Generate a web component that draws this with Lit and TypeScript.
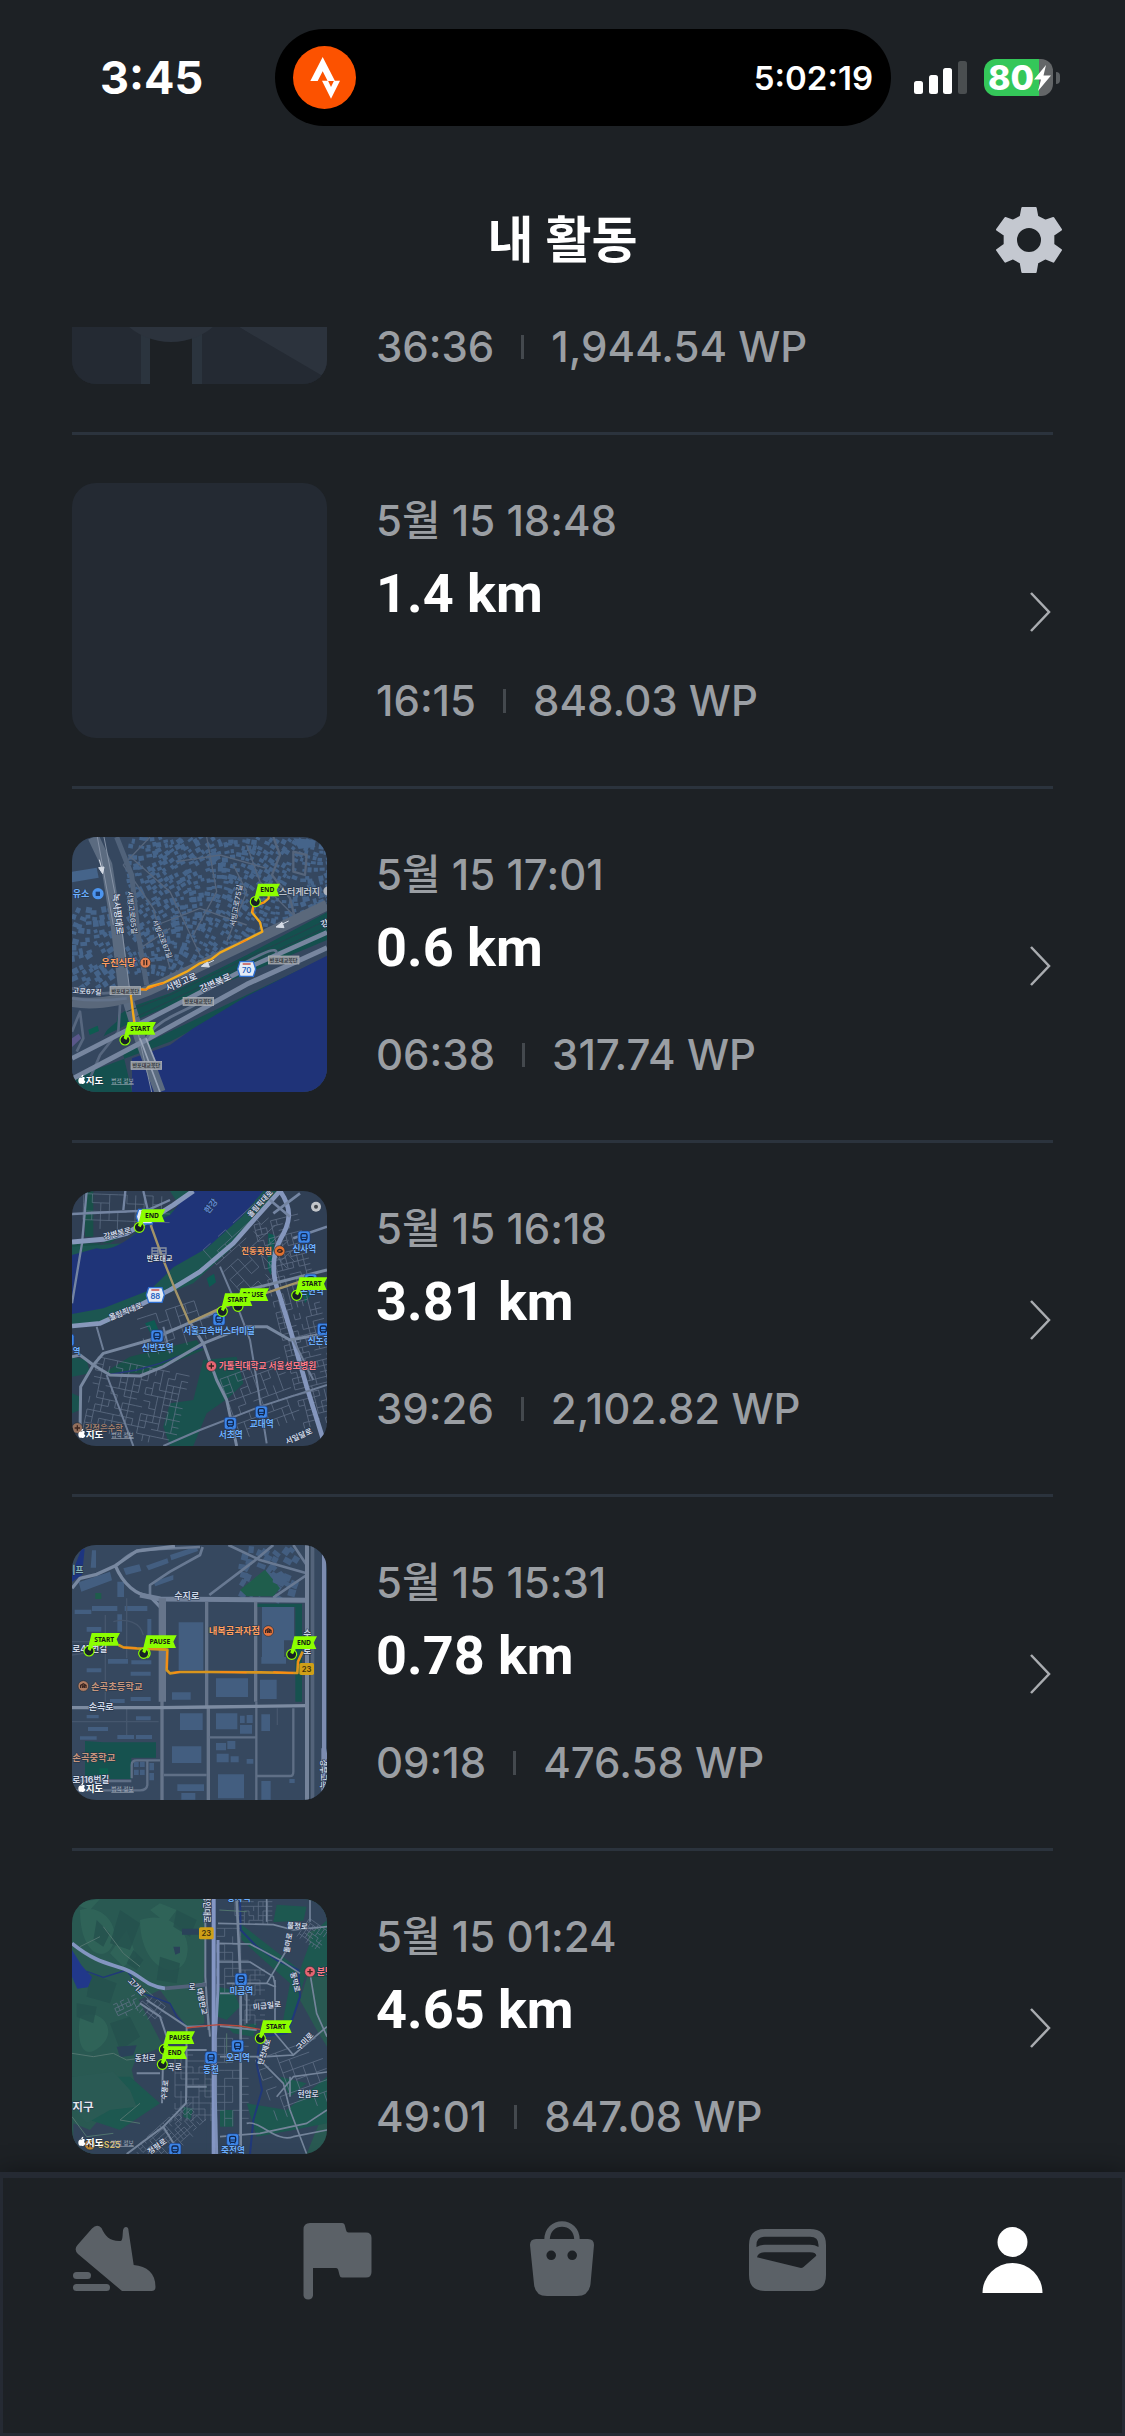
import { LitElement, html, svg, css, nothing } from "lit";
import { customElement, property, query } from "lit/decorators.js";

type MapKind = "placeholder" | "empty" | "seobinggo" | "banpo" | "suji" | "migeum";

interface Activity {
  date?: string;
  distance?: string;
  duration: string;
  points: string;
  map: MapKind;
}

const ACTIVITIES: Activity[] = [
  { duration: "36:36", points: "1,944.54 WP", map: "placeholder" },
  { date: "5월 15 18:48", distance: "1.4 km", duration: "16:15", points: "848.03 WP", map: "empty" },
  { date: "5월 15 17:01", distance: "0.6 km", duration: "06:38", points: "317.74 WP", map: "seobinggo" },
  { date: "5월 15 16:18", distance: "3.81 km", duration: "39:26", points: "2,102.82 WP", map: "banpo" },
  { date: "5월 15 15:31", distance: "0.78 km", duration: "09:18", points: "476.58 WP", map: "suji" },
  { date: "5월 15 01:24", distance: "4.65 km", duration: "49:01", points: "847.08 WP", map: "migeum" },
];

/* ---------- map drawing helpers (three map units per pixel) ---------- */

const LIME = "#8cff00";

/** Small deterministic generator, so that building footprints stay put. */
const random = (seed: number) => () => {
  seed = (seed * 16807) % 2147483647;
  return seed / 2147483647;
};

/** Scattered building footprints as one path. */
const buildings = (seed: number, x0: number, y0: number, x1: number, y1: number, step: number) => {
  const next = random(seed);
  let d = "";
  for (let y = y0; y < y1; y += step) {
    for (let x = x0; x < x1; x += step) {
      if (next() < 0.1) continue;
      const a = Math.sin(x / 90 + y / 130) * 0.6 + (next() - 0.5) * 0.3;
      const w = step * (0.5 + next() * 0.5);
      const h = step * (0.45 + next() * 0.45);
      const cx = x + (next() - 0.5) * step * 0.7;
      const cy = y + (next() - 0.5) * step * 0.7;
      const ux = Math.cos(a) * w;
      const uy = Math.sin(a) * w;
      const vx = -Math.sin(a) * h;
      const vy = Math.cos(a) * h;
      d += `M${cx.toFixed(1)} ${cy.toFixed(1)}l${ux.toFixed(1)} ${uy.toFixed(1)}l${vx.toFixed(1)} ${vy.toFixed(1)}l${(-ux).toFixed(1)} ${(-uy).toFixed(1)}z`;
    }
  }
  return d;
};

/** Irregular grid of side streets, turned by the given angle. */
const streets = (seed: number, cx: number, cy: number, w: number, h: number, angle: number, step: number) => {
  const next = random(seed);
  let d = "";
  for (let y = -h / 2; y <= h / 2; y += step) {
    for (let x = -w / 2; x <= w / 2; x += step) {
      if (next() < 0.68) d += `M${x} ${y}h${step}`;
      if (next() < 0.62) d += `M${x} ${y}v${step}`;
    }
  }
  return svg`<path d=${d} transform="translate(${cx} ${cy}) rotate(${angle})" fill="none" stroke="#64738a" stroke-width="2" />`;
};

const road = (d: string, width: number, color: string) =>
  svg`<path d=${d} fill="none" stroke=${color} stroke-width=${width} stroke-linejoin="round" />`;

const label = (x: number, y: number, text: string, size: number, color: string, angle = 0, anchor = "middle") =>
  svg`<text x=${x} y=${y} font-size=${size} fill=${color} text-anchor=${anchor} transform="rotate(${angle} ${x} ${y})">${text}</text>`;

const flag = (x: number, y: number, width: number, text: string) => svg`
  <circle cx=${x} cy=${y} r="15" fill="#182126" stroke=${LIME} stroke-width="3.5" />
  <path fill=${LIME} d="M${x + 8} ${y - 54}H${x + width + 8}L${x + width - 2} ${y - 35}L${x + width + 6} ${y - 16}H${x + 12}L${x + 4} ${y}L${x - 4} ${y - 5}Z" />
  <text class="flag-text" x=${x + width / 2 + 3} y=${y - 28} text-anchor="middle">${text}</text>`;

const station = (x: number, y: number) => svg`
  <rect x=${x - 18} y=${y - 18} width="36" height="36" rx="7" fill="#3d86e8" stroke="#1b3a78" stroke-width="2" />
  <rect x=${x - 9} y=${y - 10} width="18" height="18" rx="5" fill="none" stroke="#10264e" stroke-width="4" />
  <path d="M${x - 8} ${y + 1}H${x + 8}M${x - 7} ${y + 12}l3 -4M${x + 7} ${y + 12}l-3 -4" stroke="#10264e" stroke-width="3" />`;

const poi = (x: number, y: number, color: string, mark: string) => svg`
  <circle cx=${x} cy=${y} r="16" fill=${color} stroke="#27313c" stroke-width="2" />
  <path d=${mark} transform="translate(${x} ${y})" fill="none" stroke="#3a2520" stroke-width="4" />`;

const FORK = "M-4 -8V8M4 -8V8";
const CROSS = "M-8 0H8M0 -8V8";
const ROOF = "M-8 6V-2L0 -7L8 -2V6M-2 6V0H3V6";

const shield = (x: number, y: number, text: string) => svg`
  <path d="M${x - 20} ${y - 22}H${x + 20}L${x + 27} ${y}L${x + 20} ${y + 22}H${x - 20}L${x - 27} ${y}Z" fill="#e3ebf7" stroke="#2d6fd2" stroke-width="4" />
  <path d="M${x - 12} ${y - 15}H${x + 12}" stroke="#c9524b" stroke-width="5" />
  <text class="shield-text" x=${x} y=${y + 11} text-anchor="middle">${text}</text>`;

const routeNumber = (x: number, y: number, text: string) => svg`
  <rect x=${x - 22} y=${y - 18} width="44" height="36" rx="5" fill="#cf9f17" />
  <text class="route-text" x=${x} y=${y + 9} text-anchor="middle">${text}</text>`;

const plate = (x: number, y: number) => svg`
  <rect x=${x - 46} y=${y - 12} width="92" height="24" fill="#8f959c" stroke="#b4b8bd" stroke-width="2" />
  <text class="plate-text" x=${x} y=${y + 6} text-anchor="middle">반포대교북단</text>`;

const credit = (y: number) => svg`
  <path fill="#fff" d="M64 ${y - 9}c4 -4 10 -2 11 1c-4 3 -3 8 1 10c-2 7 -6 9 -11 7c-6 2 -10 -3 -10 -9c0 -7 5 -11 9 -9zM64 ${y - 11}c0 -4 2 -7 6 -7c0 4 -2 7 -6 7z" />
  <text class="credit" x="77" y=${y + 9}>지도</text>
  <text class="legal" x="154" y=${y + 8}>법적 정보</text>`;

const ROAD_TEXT = "#ced7e6";
const STATION_TEXT = "#6db0ff";
const FOOD_TEXT = "#ff9e5e";
const SCHOOL_TEXT = "#c8977d";

const MAPS: Record<MapKind, () => unknown> = {
  empty: () => nothing,

  placeholder: () => svg`<svg viewBox="0 0 255 255">
    <path d="M0 0H255V255L167 198L98 100L0 60Z" fill="#2c333d" />
    <path d="M0 80L90 150L167 198L249 246V255H0Z" fill="#242a33" />
    <rect x="69" y="190" width="61" height="65" fill="#2b343e" />
    <rect x="78" y="190" width="42" height="65" fill="#1d2125" />
    <circle cx="99" cy="147" r="66" fill="#2c333d" />
  </svg>`,

  seobinggo: () => svg`<svg viewBox="36 36 765 765">
    <rect x="36" y="36" width="765" height="765" fill="#35475f" />
    <path d=${buildings(11, 200, 40, 800, 440, 18)} fill="#45648a" />
    <path d=${buildings(5, 36, 250, 160, 500, 21)} fill="#45648a" />
    <path d="M36 140L110 128L116 158L36 172ZM440 90l26 -14l12 24l-22 24ZM700 40l60 4l6 22l-50 6Z" fill="#45648a" />
    <path d="M200 480L260 500L560 370L801 250V420L400 600L180 640L130 600Z" fill="#35475f" />
    <path d="M801 262L560 390L330 505L215 545L160 580L100 690L190 690L216 801H36V760L330 650L801 400Z" fill="#14504e" />
    <path d="M36 680L240 580L801 345V395L36 760Z" fill="#35475f" />
    <path d="M801 392L560 514L400 610L330 660L262 684L216 700V801H801Z" fill="#1f3378" />
    <path d="M36 560L180 545L170 590L100 650L36 680Z" fill="#35475f" />
    <path d="M85 614l28 -12l4 16l-28 12Z" fill="#0d5c50" />
    <path d="M36 640l20 -14l8 14l-28 26Z" fill="#5a578a" />
    ${road("M270 36L190 120L280 250L330 430M205 90L330 200L420 390M440 36L470 200L400 330M520 120L560 200L500 350M350 110L480 90L620 130M290 300L420 250L560 300M700 270L600 170L560 60M240 370L330 310", 4, "#55657c")}
    ${road("M640 36L660 90L636 150L690 220L705 280M700 80L740 90L735 150L700 140Z", 7, "#55657c")}
    ${road("M36 490L130 505L200 500M36 620L60 560L70 640L50 680M180 540L175 620L120 690L90 760", 8, "#57677f")}
    ${road("M100 36L140 120L170 310L190 480L240 640L300 801", 34, "#5b6b80")}
    ${road("M170 36L215 150L235 330L260 480", 15, "#50627a")}
    ${road("M132 36L185 310L215 540L275 801M112 36L160 300", 3, "#8592a5")}
    ${road("M36 530C120 545 220 520 300 480L801 240", 32, "#5a687b")}
    ${road("M200 560L330 510L801 285M230 575L801 305", 3, "#25424e")}
    ${road("M36 700L240 596L560 430L801 322", 14, "#77869f")}
    ${road("M36 762L240 655L560 478L801 368", 15, "#77869f")}
    ${road("M260 640C290 580 380 560 420 530M540 420C600 390 650 360 650 385M36 520C100 530 160 525 200 520", 8, "#62728a")}
    ${road("M240 640L300 801M258 640L286 710", 5, "#98a4b7")}
    <path d="M118 104l8 30m-10 -6l12 18l4 -20zM686 288l-26 12m6 -8l-18 14l24 2zM462 406l-26 12m6 -8l-18 14l24 2z" fill="#d5dbe5" stroke="#d5dbe5" stroke-width="3" />
    ${road("M225 610L213 515L212 492L258 494L265 486L310 474L380 440L420 415L455 402L480 383L540 354L607 320L600 292L576 262L580 244L612 232L626 220V205", 7, "#f2a91a")}
    ${road("M212 492L258 494L310 474M540 354L560 345M578 262L580 244L612 232", 4, "#ff7f12")}
    ${plate(196, 497)}${plate(415, 529)}${plate(671, 405)}${plate(259, 721)}
    ${shield(560, 432, "70")}
    ${label(38, 217, "유소", 27, STATION_TEXT, 0, "start")}
    <circle cx="114" cy="206" r="17" fill="#4c94ee" /><rect x="107" y="200" width="13" height="13" fill="#1c3f75" />
    ${label(124, 424, "우진식당", 28, FOOD_TEXT, 0, "start")}${poi(256, 413, "#e38052", FORK)}
    ${label(656, 209, "스터게러지", 27, "#bcc2cc", 0, "start")}<circle cx="804" cy="198" r="14" fill="#aeb4bd" />
    ${label(164, 268, "녹사평대로", 27, ROAD_TEXT, 84)}
    ${label(208, 264, "서빙고로65길", 22, "#b4bfd1", 84)}
    ${label(300, 345, "서빙고로67길", 21, "#b4bfd1", 68)}
    ${label(536, 243, "서빙고로75길", 22, "#b4bfd1", -80)}
    ${label(368, 480, "서빙고로", 27, ROAD_TEXT, -24)}
    ${label(470, 482, "강변북로", 27, ROAD_TEXT, -24)}
    ${label(37, 504, "고로67길", 22, ROAD_TEXT, 4, "start")}
    ${label(786, 308, "강", 26, ROAD_TEXT, -20, "start")}
    ${flag(586, 230, 66, "END")}${flag(195, 645, 85, "START")}
    ${credit(767)}
  </svg>`,

  banpo: () => svg`<svg viewBox="36 33 765 765">
    <rect x="36" y="33" width="765" height="765" fill="#303f54" />
    <path d="M75 33H100V170H75ZM36 190L150 190L240 130L300 110L36 230Z" fill="#195049" />
    <path d="M330 33H660L620 80L520 200L400 310L250 370L140 430L36 445V200L190 190L270 120L360 80Z" fill="#1c5651" />
    <path d="M390 33H610L545 110L440 205L340 262L270 330L130 385L36 402V225L110 205C160 215 205 180 250 140L330 105Z" fill="#1f3478" />
    <path d="M440 295l22 -14l6 26l-20 14ZM625 160l20 6l-12 120l-10 -20ZM255 430l28 -10l14 34l-22 12ZM725 330l30 10l-20 30Z" fill="#0e5a52" />
    <path d="M130 580L210 530L330 500L410 480L430 510L260 580Z" fill="#195049" />
    <path d="M430 540L530 530L550 610L510 650L440 700L400 798H330L310 740L330 670L400 660Z" fill="#19524e" />
    <path d="M36 530L80 540L90 580L36 590ZM36 640L60 650V690L36 700Z" fill="#19524e" />
    ${streets(3, 220, 660, 260, 210, 12, 20)}
    ${streets(9, 720, 420, 130, 620, -14, 17)}
    ${streets(17, 560, 220, 180, 190, -42, 30)}
    ${streets(23, 600, 650, 190, 180, -20, 24)}
    ${streets(31, 190, 90, 240, 90, 2, 26)}
    ${streets(43, 340, 430, 200, 90, -18, 30)}
    ${road("M140 585L230 570L300 550L430 500", 4, "#26387a")}
    ${road("M36 102L160 96L260 92L330 60M250 33L270 120M196 33L190 90M66 190L36 370M66 190L80 33", 7, "#7485a2")}
    ${road("M36 186L130 178L200 160L260 125L340 75L400 33", 15, "#8798bb")}
    ${road("M36 438L120 430L230 380L330 330L420 275L520 190L590 110L660 33", 14, "#8798bb")}
    ${road("M250 370L340 320L400 285L480 225", 5, "#8798bb")}
    ${road("M660 33C700 90 690 130 660 180C630 240 640 300 660 350L700 480L740 620L790 780", 14, "#8496bd")}
    ${road("M630 60L690 110M720 40L640 100M801 140L700 175", 8, "#7485a2")}
    ${road("M36 530L60 525L100 555L150 585L240 588L310 560L430 490L480 470L560 440L620 440L690 480L801 460", 9, "#77879f")}
    ${road("M100 555L62 620L60 760M100 555L130 520L270 480L390 428L480 390L560 330L801 270M390 428L430 490L470 600L500 660L530 798", 9, "#77879f")}
    ${road("M480 260L540 400L570 480L590 600L620 790M310 798L420 750L600 680L801 615M700 480L760 600M140 585L180 690L220 798M110 440L130 510M310 440L330 520", 6, "#6d7d96")}
    ${road("M272 135L310 240L350 340L388 428L480 385L540 365L720 305", 7, "#a39468")}
    ${shield(256, 110, "70")}${shield(286, 345, "88")}
    ${flag(238, 142, 70, "END")}
    ${label(460, 84, "한강", 26, "#5c86d8", -52)}
    ${label(174, 168, "강변북로", 23, ROAD_TEXT, -14)}
    ${label(200, 402, "올림픽대로", 23, ROAD_TEXT, -22)}
    ${label(606, 76, "올림픽대로", 22, ROAD_TEXT, -48)}
    ${label(720, 776, "서일달로", 23, ROAD_TEXT, -24)}
    ${label(260, 243, "반포대교", 21, "#d8deea", 0, "start")}
    <path d="M276 204h18v18h-18zM300 204h18v18h-18zM276 213h18M300 213h18" fill="none" stroke="#8b93a0" stroke-width="4" />
    ${label(544, 222, "진동횟집", 25, FOOD_TEXT, 0, "start")}${poi(659, 213, "#e0702f", "M-7 0C-4 -6 4 -6 8 0C4 5 -4 5 -7 0")}
    <circle cx="768" cy="80" r="15" fill="#c3c6ca" /><circle cx="768" cy="80" r="6" fill="#41454a" />
    ${station(732, 171)}${label(733, 217, "신사역", 26, STATION_TEXT)}
    ${station(752, 300)}${label(755, 343, "논현역", 26, STATION_TEXT)}
    ${station(790, 448)}${label(743, 493, "신논현", 26, STATION_TEXT, 0, "start")}
    ${station(477, 418)}${label(477, 463, "서울고속버스터미널", 26, STATION_TEXT)}
    ${station(291, 468)}${label(293, 513, "신반포역", 26, STATION_TEXT)}
    ${station(24, 480)}${label(38, 523, "역", 25, STATION_TEXT, 0, "start")}
    ${station(604, 696)}${label(605, 741, "교대역", 26, STATION_TEXT)}
    ${station(511, 730)}${label(512, 775, "서초역", 26, STATION_TEXT)}
    ${poi(454, 558, "#e76572", CROSS)}${label(476, 568, "가톨릭대학교 서울성모병원", 26, "#ff7a86", 0, "start")}
    ${poi(52, 744, "#94705d", CROSS)}${label(74, 752, "김정은수학", 25, "#a5806b", 0, "start")}
    ${flag(710, 346, 84, "START")}${flag(534, 379, 85, "PAUSE")}${flag(487, 394, 84, "START")}
    ${credit(764)}
  </svg>`,

  suji: () => svg`<svg viewBox="36 30 765 765">
    <rect x="36" y="30" width="765" height="765" fill="#36485f" />
    <path d=${buildings(7, 540, 36, 720, 180, 26)} fill="#435e80" />
    <path d="M65 40L74 42L66 120L36 140V115Z" fill="#1d3580" />
    <path d="M540 165L615 104L660 160L640 184H560ZM106 174h18v18h-18Z" fill="#1f5d4c" />
    <path d="M590 206H726V500H706V216H590ZM75 618L130 622H288V668H214V732H75Z" fill="#16524f" />
    <path d="M118 700h26v18h-26Z" fill="#0d6050" />
    <path fill="#435e80" d="M56 142L150 110L156 136L64 170ZM96 46h12v52h-16ZM190 100l48 -12l6 20l-46 12ZM258 92l64 -22l4 14l-60 22ZM330 60l80 -26l4 14l-80 28ZM280 140l60 -20v14l-54 20ZM172 140h20v46h-20ZM96 213h76v15H96ZM194 213h68v15h-68ZM44 224h50v13H44ZM172 238h14v52h-14ZM262 252h12v52h-12ZM80 276h44v14H80ZM356 262h74v144h-74ZM606 216h96v100h-30v70H606ZM604 366h74v20h-74ZM468 430h96v56h-96ZM600 434h50v58h-50ZM336 472h56v22h-56ZM360 535h68v50h-68ZM468 535h64v48h-64ZM540 542h14v22h-14ZM560 540h18v24h-18ZM604 538h26v50h-26ZM540 570h36v26h-36ZM336 634h88v50h-88ZM468 624h30v22h-30ZM502 618h24v24h-24ZM470 656h36v26h-36ZM512 664h24v18h-24ZM560 672h20v14h-20ZM474 718h78v72h-78ZM604 738h28v56h-28ZM352 748h80v20h-80ZM364 774h42v20h-42ZM688 732h16v12h-16ZM144 372h60v14h-60ZM214 376h60v12h-60ZM212 410h60v12h-60ZM80 400h44v12H80ZM212 486h60v12h-60ZM150 492h44v12h-44ZM228 544h44v12h-44ZM80 540h36v10H80ZM84 576h60v12H84ZM172 600h50v12h-50ZM228 600h48v12h-48ZM60 604h50v10H60ZM222 680h14v16h-14ZM240 680h14v16h-14ZM222 704h14v16h-14ZM240 704h14v16h-14ZM268 684h14v22h-14ZM268 714h14v22h-14ZM640 120l24 -12l22 22l-18 26l-30 -14Z" />
    ${road("M36 320H130M136 240V500M200 190V370M36 560H296M200 520V600M36 360L90 352M160 260C200 250 240 260 250 300M652 520V570", 4, "#45566d")}
    ${road("M170 92C200 60 230 44 260 44L420 36M428 36L420 60L330 110L270 150V180M505 30L600 75L740 115M640 30L580 80L448 180M740 120L640 188M700 30L740 90", 8, "#687992")}
    ${road("M36 160L60 130L110 118L166 92L230 48L345 34M166 92C190 150 230 180 270 184L301 216", 10, "#7888a0")}
    ${road("M240 180L301 192L740 196", 15, "#71819a")}
    ${road("M307 190V500", 22, "#66758b")}
    ${road("M306 480V795M440 200V520M445 520V795", 10, "#66758b")}
    ${road("M587 200V500", 10, "#66758b")}
    ${road("M589 500V795M312 720H440M448 607H589M592 723H690Q700 723 700 710V520M215 730V690Q215 676 230 676H300M262 676V750Q260 766 240 766H36M36 738H214", 7, "#5f6f86")}
    ${road("M36 518H300L450 516L740 512", 10, "#7c8ba1")}
    ${road("M741 30V795", 12, "#74839a")}${road("M757 30V795", 12, "#53637a")}
    ${road("M750 30V795", 2, "#2b3a4c")}
    ${road("M792 50V640L800 680M790 640V795", 12, "#7c8cb0")}
    ${label(343, 191, "수지로", 27, ROAD_TEXT, 0, "start")}
    ${label(86, 525, "손곡로", 27, ROAD_TEXT, 0, "start")}
    ${label(37, 351, "로47번길", 26, ROAD_TEXT, 0, "start")}
    ${label(37, 743, "로116번길", 26, ROAD_TEXT, 0, "start")}
    ${label(37, 114, "|프", 26, "#88b3b8", 0, "start")}
    ${label(742, 306, "수", 26, ROAD_TEXT)}${label(742, 358, "로", 26, ROAD_TEXT)}
    ${label(784, 716, "경부고속", 24, ROAD_TEXT, 90)}
    ${label(446, 298, "내복곰과자점", 28, FOOD_TEXT, 0, "start")}${poi(625, 288, "#e5743c", ROOF)}
    ${poi(70, 453, "#b07c62", ROOF)}${label(93, 464, "손곡초등학교", 28, SCHOOL_TEXT, 0, "start")}
    ${label(37, 678, "손곡중학교", 28, SCHOOL_TEXT, 0, "start")}
    ${road("M176 330L190 337L230 340L322 344L320 405L330 415L360 411L450 411L600 412L712 414L714 380L728 350", 8, "#d9951d")}
    ${road("M190 337L230 340M322 350L320 400M340 414L360 410M480 411L560 413M640 411L700 414M714 390L716 372", 4, "#ff8a12")}
    ${routeNumber(740, 402, "23")}
    ${flag(87, 348, 85, "START")}${flag(251, 355, 91, "PAUSE")}
    <path d="M262 341A16 16 0 0 1 262 369" fill="none" stroke=${LIME} stroke-width="3.5" />
    ${flag(695, 358, 68, "END")}
    ${credit(761)}
  </svg>`,

  migeum: () => svg`<svg viewBox="36 27 765 765">
    <rect x="36" y="27" width="765" height="765" fill="#295952" />
    <path d="M60 60C120 40 180 100 160 160S60 200 60 60ZM240 90C320 60 400 120 380 200S240 240 240 90ZM60 380C120 350 180 420 120 470S50 440 60 380ZM36 40L120 27L90 60ZM150 190L200 120L230 200L190 230ZM270 60L300 40L350 60L320 100Z" fill="#31655a" opacity=".8" />
    <path d="M180 60l60 40l-30 80l-60 -20ZM90 250l80 30l-20 60l-70 -20ZM300 200l60 20l-10 60l-60 -10ZM110 90l40 40l-20 40l-30 -20ZM350 60l60 30l-20 50l-50 -30ZM50 340l60 10l-10 50l-50 -20ZM150 400l60 -20l30 60l-60 40ZM220 180l30 30l-20 30l-30 -20Z" fill="#24504e" opacity=".8" />
    <path d="M440 27H801V100L740 130L760 200L720 330L770 420L801 470V640L740 792H420L440 600L430 300Z" fill="#32445a" />
    <path d="M236 330L300 300L380 410L440 400V792H40V700L90 720L150 650L240 640L215 540L230 500L310 470Z" fill="#32445a" />
    <path d="M540 100L630 170L720 240L760 130L801 90V260L735 260L690 420L660 440L690 280L600 200L545 150ZM474 290L520 300L540 350L500 390L474 380ZM560 640L680 660L801 560V700L700 720L590 740ZM480 660H520V710H480ZM370 650L400 656L390 690L370 680ZM36 560L210 560L300 640L180 720L90 690L36 640ZM650 44L740 50L730 92L640 96ZM660 560L740 580L690 620ZM500 410L590 400L580 440L520 430Z" fill="#1d5850" />
    <path d="M36 560L160 545L210 600L230 650L150 660L80 700L36 650Z" fill="#2a5a54" />
    <path d="M340 170h20v18l-14 6ZM366 116h50v18h-50ZM170 470l60 -4l-10 30l-40 6Z" fill="#2a4259" />
    ${streets(4, 580, 65, 110, 60, 0, 14)}
    ${streets(8, 760, 130, 70, 60, 35, 11)}
    ${streets(12, 570, 320, 60, 160, 0, 15)}
    ${streets(16, 400, 590, 110, 190, 0, 18)}
    ${streets(20, 330, 740, 210, 90, -42, 13)}
    ${streets(24, 510, 570, 80, 250, 0, 24)}
    ${streets(28, 270, 350, 90, 60, 40, 16)}
    ${streets(32, 700, 560, 180, 170, -20, 32)}
    ${streets(36, 510, 200, 80, 170, 0, 24)}
    ${streets(38, 195, 350, 60, 40, -25, 12)}
    <path d="M36 180L64 225L96 262L84 292L52 296L36 260Z" fill="#21388a" />
    ${road("M540 27L542 120L590 170L650 210L715 240L720 320L700 380L680 430L600 440L590 520L606 600L580 690L570 792", 6, "#20387a")}
    ${road("M80 244L130 262L200 240L250 310L330 340L350 380L380 410", 4, "#20387a")}
    ${road("M36 490L100 500L160 490L200 510L240 505M130 110L190 190L240 230M60 170L120 140M240 640L180 690L240 700M36 680L80 740L160 730M500 430L500 520M478 60L560 65", 3, "#52756f")}
    ${road("M474 100L640 104L700 120L801 110M474 216H570L640 260L646 290L620 280H500M645 270V430L700 495L801 410M680 180L620 280M478 160L570 162L660 210L720 250M480 500L620 500L700 495M750 250L770 370L801 440M560 310V400M480 310H560M590 500L670 580L690 660L740 792M801 546L700 560L650 620M480 740L600 730L740 700L801 660M560 700C600 690 650 760 700 740L801 720M620 27V95M750 27V95M690 560V620", 5, "#74849a")}
    ${road("M530 27L542 280V792", 8, "#74849a")}
    ${road("M436 27V260L446 420M436 280L380 290M440 330L450 440M240 340L300 380L320 440L310 470L306 640M380 410L378 640L310 710L200 792M320 480H440M380 590H440M230 550H300M310 710L360 792M260 330L380 410L440 408M480 408L590 420", 6, "#74849a")}
    ${road("M36 160C110 220 150 220 200 240C240 255 260 290 315 295", 11, "#8395c0")}
    ${road("M315 295L440 284", 11, "#53627a")}
    ${road("M461 27V792", 12, "#8496c4")}${road("M474 150V300L466 440V620L470 792", 9, "#7e90ba")}
    ${road("M380 414L440 407L480 404L540 408L600 418", 4, "#b9493d")}
    ${label(432, 56, "용인대로", 23, ROAD_TEXT, 90)}
    ${routeNumber(439, 130, "23")}
    ${station(534, 2)}${label(536, 33, "정자역", 26, STATION_TEXT)}
    ${station(543, 268)}${label(544, 313, "미금역", 26, STATION_TEXT)}
    ${station(533, 468)}${label(534, 513, "오리역", 26, STATION_TEXT)}
    ${station(453, 503)}${label(453, 548, "동천", 26, STATION_TEXT)}
    ${station(518, 749)}${label(519, 791, "죽전역", 26, STATION_TEXT)}
    ${station(345, 778)}
    ${poi(750, 245, "#e76572", CROSS)}${label(770, 255, "분당", 27, "#ff7a86", 0, "start")}
    ${label(712, 116, "불정로", 23, ROAD_TEXT, 4)}
    ${label(692, 160, "돌마로", 22, ROAD_TEXT, -80)}
    ${label(698, 278, "동막로", 22, ROAD_TEXT, 76)}
    ${label(622, 355, "미금일로", 23, ROAD_TEXT, -6)}
    ${label(740, 460, "구미로", 23, ROAD_TEXT, -46)}
    ${label(620, 488, "탄천제로", 22, ROAD_TEXT, -72)}
    ${label(744, 620, "현암로", 23, ROAD_TEXT)}
    ${label(224, 296, "고기로", 23, ROAD_TEXT, 46)}
    ${label(396, 296, "로", 22, ROAD_TEXT)}${label(418, 336, "대왕판교", 22, ROAD_TEXT, 78)}
    ${label(256, 514, "동천로", 23, ROAD_TEXT)}${label(344, 540, "곡로", 23, ROAD_TEXT)}
    ${label(322, 600, "수풍로", 22, ROAD_TEXT, -84)}
    ${label(296, 776, "정평로", 23, ROAD_TEXT, -36)}
    ${label(37, 664, "지구", 35, "#e4e8ee", 0, "start")}
    ${poi(90, 764, "#c08a35", FORK)}${label(112, 774, "GS25", 26, "#d8bd68", 0, "start")}
    ${flag(313, 478, 84, "PAUSE")}${flag(307, 523, 68, "END")}${flag(601, 445, 88, "START")}
    ${credit(758)}
  </svg>`,
};

@customElement("route-map")
export class RouteMap extends LitElement {
  @property() kind: MapKind = "empty";

  static styles = css`
    :host {
      display: block;
      flex: none;
      width: 255px;
      height: 255px;
      border-radius: 24px;
      overflow: hidden;
      background: #242a33;
    }
    svg {
      display: block;
      width: 100%;
      height: 100%;
    }
    text {
      font-family: Inter, "Noto Sans CJK KR", sans-serif;
      font-weight: 700;
      paint-order: stroke;
      stroke: #223044;
      stroke-width: 3px;
      stroke-linejoin: round;
    }
    .flag-text {
      font: 700 20px "Noto Sans", sans-serif;
      fill: #142014;
      stroke: none;
    }
    .shield-text,
    .route-text {
      font-size: 23px;
      font-weight: 600;
      fill: #2460bd;
      stroke: none;
    }
    .route-text {
      fill: #40320c;
    }
    .plate-text {
      font-size: 15px;
      fill: #31363c;
      stroke: none;
    }
    .credit {
      font-size: 29px;
      fill: #fff;
      stroke-width: 2px;
    }
    .legal {
      font-size: 17px;
      font-weight: 400;
      fill: #aab3c0;
      stroke: none;
      text-decoration: underline;
    }
  `;

  render() {
    return MAPS[this.kind]();
  }
}

@customElement("activity-row")
export class ActivityRow extends LitElement {
  @property({ attribute: false }) activity!: Activity;

  static styles = css`
    :host {
      display: block;
    }
    .row {
      display: flex;
      align-items: center;
      gap: 48px;
      padding: 48px 0;
      border-bottom: 3px solid #2b333d;
      color: #9a9ea3;
      text-decoration: none;
    }
    .info {
      flex: 1;
      align-self: stretch;
      display: flex;
      flex-direction: column;
      gap: 16px;
      padding: 13px 0 12px 1px;
      font-size: 42px;
      font-weight: 500;
      line-height: 50px;
    }
    .distance {
      font-family: Roboto, sans-serif;
      font-size: 54px;
      font-weight: 700;
      line-height: 64px;
      color: #fff;
    }
    .stats {
      display: flex;
      align-items: center;
      gap: 27px;
      margin-top: auto;
    }
    .separator {
      width: 3px;
      height: 24px;
      background: #44494e;
    }
    .chevron {
      flex: none;
      width: 24px;
      height: 42px;
    }
  `;

  render() {
    const a = this.activity;
    return html`<a class="row" href="#activity">
      <route-map .kind=${a.map}></route-map>
      <span class="info">
        ${a.date ? html`<span>${a.date}</span>` : nothing}
        ${a.distance ? html`<span class="distance">${a.distance}</span>` : nothing}
        <span class="stats">
          <span>${a.duration}</span>
          <span class="separator"></span>
          <span>${a.points}</span>
        </span>
      </span>
      <svg class="chevron" viewBox="0 0 24 42" aria-hidden="true">
        <path d="M2 3L20 22L2 41" fill="none" stroke="#a9acb0" stroke-width="2.5" />
      </svg>
    </a>`;
  }
}

const TABS = [
  {
    name: "운동",
    icon: svg`<path d="M27 15.500Q32 10.500 36.500 15C40 23 45 28.500 55.500 28C58 28 57.500 21 58 17.500Q58.500 14 61 14T63.500 17.500L68.700 52C82 53 90.500 60 90.500 74Q90.500 78 86.500 78H57L13 41Q8.500 36.500 12.500 32Z" />
      <rect x="8" y="59" width="18" height="7" rx="3.500" /><rect x="8" y="71" width="37" height="7" rx="3.500" />`,
  },
  {
    name: "챌린지",
    icon: svg`<path d="M20 10H52Q54.500 10 55 13L56 17Q56.500 19.500 58.500 19.500H76Q81.500 19.500 81.500 25V59Q81.500 64.500 76 64.500H52Q50 64.500 49.500 62L48.500 58Q48 55 46 55H23V82.500A4.800 4.800 0 0 1 13.500 82.500V16.500Q13.500 10 20 10Z" />`,
  },
  {
    name: "상점",
    icon: svg`<path d="M32 27C32 5.500 62 5.500 62 27" fill="none" stroke="currentColor" stroke-width="5.500" />
      <path fill-rule="evenodd" d="M21 26H73Q79 26 79 32L75.500 71Q74 83 62 83H32Q20 83 19 71L15 32Q15 26 21 26ZM41 42.300A4.800 4.800 0 1 0 31.400 42.300A4.800 4.800 0 1 0 41 42.300ZM62 42.300A4.800 4.800 0 1 0 52.400 42.300A4.800 4.800 0 1 0 62 42.300Z" />`,
  },
  {
    name: "지갑",
    icon: svg`<path fill-rule="evenodd" d="M25 16H70Q86 16 86 32V62Q86 78 70 78H25Q9 78 9 62V32Q9 16 25 16ZM16.500 34Q20 31.700 25 31.700H70Q75 31.700 78.500 34V32Q78.500 23.700 70 23.700H25Q16.500 23.700 16.500 32ZM17 44.300L60 54.800Q62 55.200 63.500 54L76 43Q77 42 74.500 40Q73 39.300 70 39.300H25Q18 39.300 17 44.300Z" />`,
  },
  {
    name: "내 정보",
    icon: svg`<circle cx="47.500" cy="29" r="15" /><path d="M17.500 80A30 30 0 0 1 77.500 80Z" />`,
  },
];

@customElement("app-root")
export class AppRoot extends LitElement {
  @query(".list") private list!: HTMLElement;

  static styles = css`
    :host {
      display: flex;
      flex-direction: column;
      height: 100vh;
      background: #1d2125;
      color: #fff;
      font-family: Inter, "Noto Sans CJK KR", sans-serif;
    }
    button {
      border: 0;
      padding: 0;
      background: none;
      color: inherit;
    }
    svg {
      display: block;
    }
    .status {
      display: grid;
      grid-template-columns: 275fr 616fr 234fr;
      align-items: center;
      padding: 29px 0 27px;
    }
    .clock {
      padding-left: 100px;
      font-size: 45px;
      font-weight: 700;
      line-height: 48px;
    }
    .island {
      display: flex;
      align-items: center;
      justify-content: space-between;
      padding: 17px 18px;
      border-radius: 49px;
      background: #000;
      font-size: 33px;
      font-weight: 600;
    }
    .logo {
      width: 63px;
      height: 63px;
    }
    .indicators {
      display: flex;
      align-items: center;
      gap: 16px;
      padding-left: 23px;
    }
    .signal {
      width: 54px;
      height: 36px;
    }
    .battery {
      display: flex;
      align-items: center;
      gap: 3px;
    }
    .cell {
      display: flex;
      align-items: center;
      width: 69px;
      height: 37px;
      padding-left: 4px;
      box-sizing: border-box;
      border-radius: 12px;
      background: linear-gradient(to right, #34c759 80%, #636668 80%);
      font-size: 34px;
      font-weight: 800;
    }
    .bolt {
      flex: none;
      width: 17px;
      height: 26px;
    }
    .nub {
      width: 4px;
      height: 12px;
      border-radius: 0 6px 6px 0;
      background: #5b5f62;
    }
    .title-bar {
      display: grid;
      grid-template-columns: 1fr auto 1fr;
      align-items: center;
      height: 174px;
      padding: 0 63px;
    }
    h1 {
      grid-column: 2;
      margin: 0;
      font-size: 50px;
      font-weight: 700;
      line-height: 60px;
    }
    .settings {
      justify-self: end;
    }
    .gear {
      width: 66px;
      height: 66px;
    }
    .list {
      flex: 1;
      min-height: 0;
      overflow-y: auto;
      scrollbar-width: none;
      padding: 0 72px;
    }
    .tabs {
      position: relative;
      display: grid;
      grid-template-columns: repeat(5, 1fr);
      height: 264px;
      box-sizing: border-box;
      padding-top: 41px;
      background: #1d2125;
      box-shadow:
        inset 0 6px #252a33,
        inset 0 0 0 3px #252a33,
        0 0 24px rgba(0, 0, 0, 0.4);
    }
    .tab {
      display: flex;
      justify-content: center;
      color: #5b6167;
    }
    .tab.current {
      color: #fff;
    }
    .tab svg {
      width: 96px;
      height: 96px;
      fill: currentColor;
    }
  `;

  async firstUpdated() {
    const rows = Array.from(this.renderRoot.querySelectorAll<ActivityRow>("activity-row"));
    await Promise.all(rows.map((row) => row.updateComplete));
    this.list.scrollTop = 246;
  }

  render() {
    return html`
      <div class="status">
        <span class="clock">3:45</span>
        <div class="island">
          <svg class="logo" viewBox="0 0 189 189" aria-hidden="true">
            <circle cx="94.500" cy="94.500" r="94.500" fill="#fc5200" />
            <path fill="#fff" d="M52 105L89 33L126 105H104L89 76L74 105ZM87 104H105L114 123L123 104H141L114 158Z" />
          </svg>
          <span>5:02:19</span>
        </div>
        <div class="indicators">
          <svg class="signal" viewBox="0 0 54 36" aria-hidden="true">
            <g fill="#fff">
              <rect y="21" width="9" height="13" rx="2.500" />
              <rect x="15" y="15" width="9" height="19" rx="2.500" />
              <rect x="29" y="8" width="9" height="26" rx="2.500" />
            </g>
            <rect x="44" y="1" width="9" height="33" rx="2.500" fill="#4a4e50" />
          </svg>
          <div class="battery">
            <span class="cell">
              80
              <svg class="bolt" viewBox="0 0 17 26" aria-hidden="true">
                <path d="M12 0L0 14.500H7L4 26L17 10.500H9.500Z" fill="#fff" />
              </svg>
            </span>
            <span class="nub"></span>
          </div>
        </div>
      </div>
      <header class="title-bar">
        <h1>내 활동</h1>
        <button class="settings" aria-label="설정">
          <svg class="gear" viewBox="408 561 198 198">
            <path
              fill="#c4c8d0"
              stroke="#c4c8d0"
              stroke-width="6"
              stroke-linejoin="round"
              fill-rule="evenodd"
              d="M487 564H527L532 590L556 602L580 594L603 629L580 645V674L603 690L580 725L556 715L532 728L527 756H487L482 728L459 715L436 725L411 690L434 674V645L411 629L436 594L459 602L482 590ZM546 660A39 39 0 1 0 468 660A39 39 0 1 0 546 660Z"
            />
          </svg>
        </button>
      </header>
      <main class="list">
        ${ACTIVITIES.map((activity) => html`<activity-row .activity=${activity}></activity-row>`)}
      </main>
      <nav class="tabs">
        ${TABS.map(
          (tab, index) => html`<a
            class="tab ${index === 4 ? "current" : ""}"
            href="#tab-${index}"
            aria-label=${tab.name}
          >
            <svg viewBox="0 0 96 96" aria-hidden="true">${tab.icon}</svg>
          </a>`,
        )}
      </nav>
    `;
  }
}
